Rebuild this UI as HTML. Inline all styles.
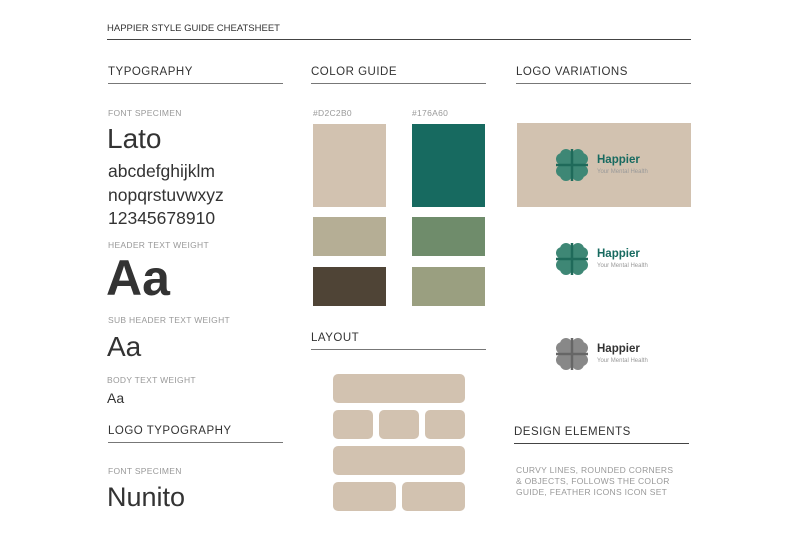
<!DOCTYPE html>
<html><head><meta charset="utf-8"><style>
*{margin:0;padding:0;box-sizing:border-box}
body{width:800px;height:533px;background:#fff;position:relative;overflow:hidden;font-family:"Liberation Sans",sans-serif;color:#333}
.a{position:absolute;white-space:nowrap;line-height:1}
.h{font-size:11.5px;color:#333;letter-spacing:0.5px}
.l{position:absolute;height:1px;background:#444}
.s{font-size:8.5px;color:#999;letter-spacing:0.3px}
.b{position:absolute;background:#D2C2B0;border-radius:5px}
.sw{position:absolute}
.lt{font-size:11.5px;font-weight:bold;color:#176A60}
.st{font-size:6px;color:#999}
</style></head><body>
<div class="a" style="left:107px;top:24px;font-size:9.5px;color:#333">HAPPIER STYLE GUIDE CHEATSHEET</div>
<div class="l" style="left:107px;top:39px;width:584px"></div>

<div class="a h" style="left:108px;top:67px">TYPOGRAPHY</div>
<div class="l" style="left:108px;top:83px;width:175px;background:#777"></div>
<div class="a h" style="left:311px;top:67px">COLOR GUIDE</div>
<div class="l" style="left:311px;top:83px;width:175px;background:#777"></div>
<div class="a h" style="left:516px;top:67px">LOGO VARIATIONS</div>
<div class="l" style="left:516px;top:83px;width:175px;background:#777"></div>

<div class="a s" style="left:108px;top:109px">FONT SPECIMEN</div>
<div class="a" style="left:107px;top:125px;font-size:28px;color:#333">Lato</div>
<div class="a" style="left:108px;top:163px;font-size:17.5px">abcdefghijklm</div>
<div class="a" style="left:108px;top:187px;font-size:17.5px">nopqrstuvwxyz</div>
<div class="a" style="left:108px;top:210px;font-size:17.5px">12345678910</div>
<div class="a s" style="left:108px;top:241px">HEADER TEXT WEIGHT</div>
<div class="a" style="left:106px;top:253px;font-size:50px;font-weight:bold;color:#333">Aa</div>
<div class="a s" style="left:108px;top:316px">SUB HEADER TEXT WEIGHT</div>
<div class="a" style="left:107px;top:333px;font-size:28px">Aa</div>
<div class="a s" style="left:107px;top:376px">BODY TEXT WEIGHT</div>
<div class="a" style="left:107px;top:391px;font-size:14px">Aa</div>
<div class="a h" style="left:108px;top:426px">LOGO TYPOGRAPHY</div>
<div class="l" style="left:108px;top:442px;width:175px;background:#777"></div>
<div class="a s" style="left:108px;top:467px">FONT SPECIMEN</div>
<div class="a" style="left:107px;top:484px;font-size:27px">Nunito</div>

<div class="a s" style="left:313px;top:109px">#D2C2B0</div>
<div class="a s" style="left:412px;top:109px">#176A60</div>
<div class="sw" style="left:313px;top:124px;width:73px;height:83px;background:#D2C2B0"></div>
<div class="sw" style="left:412px;top:124px;width:73px;height:83px;background:#176A60"></div>
<div class="sw" style="left:313px;top:217px;width:73px;height:39px;background:#B5AE95"></div>
<div class="sw" style="left:412px;top:217px;width:73px;height:39px;background:#6F8C6B"></div>
<div class="sw" style="left:313px;top:267px;width:73px;height:39px;background:#4F4436"></div>
<div class="sw" style="left:412px;top:267px;width:73px;height:39px;background:#9A9F80"></div>

<div class="a h" style="left:311px;top:333px">LAYOUT</div>
<div class="l" style="left:311px;top:349px;width:175px;background:#777"></div>
<div class="b" style="left:333px;top:374px;width:132px;height:29px"></div>
<div class="b" style="left:333px;top:410px;width:40px;height:29px"></div>
<div class="b" style="left:379px;top:410px;width:40px;height:29px"></div>
<div class="b" style="left:425px;top:410px;width:40px;height:29px"></div>
<div class="b" style="left:333px;top:446px;width:132px;height:29px"></div>
<div class="b" style="left:333px;top:482px;width:63px;height:29px"></div>
<div class="b" style="left:402px;top:482px;width:63px;height:29px"></div>

<div class="sw" style="left:517px;top:123px;width:174px;height:84px;background:#D2C2B0"></div>

<svg width="0" height="0" style="position:absolute"><defs>
<g id="clv">
<circle cx="-6" cy="-10" r="6"/><circle cx="6" cy="-10" r="6"/>
<circle cx="-6" cy="10" r="6"/><circle cx="6" cy="10" r="6"/>
<circle cx="-10" cy="-6" r="6"/><circle cx="-10" cy="6" r="6"/>
<circle cx="10" cy="-6" r="6"/><circle cx="10" cy="6" r="6"/>
<rect x="-8" y="-8" width="16" height="16"/>
</g></defs></svg>

<svg class="sw" style="left:554px;top:147px" width="36" height="36" viewBox="-18 -18 36 36"><use href="#clv" fill="#3E8775"/><path d="M0-16V16M-16 0H16" stroke="#1F6A5A" stroke-width="2.5"/></svg>
<div class="a lt" style="left:597px;top:155px">Happier</div>
<div class="a st" style="left:597px;top:169px">Your Mental Health</div>

<svg class="sw" style="left:554px;top:241px" width="36" height="36" viewBox="-18 -18 36 36"><use href="#clv" fill="#3E8775"/><path d="M0-16V16M-16 0H16" stroke="#1F6A5A" stroke-width="2.5"/></svg>
<div class="a lt" style="left:597px;top:249px">Happier</div>
<div class="a st" style="left:597px;top:263px">Your Mental Health</div>

<svg class="sw" style="left:554px;top:336px" width="36" height="36" viewBox="-18 -18 36 36"><use href="#clv" fill="#888"/><path d="M0-16V16M-16 0H16" stroke="#666" stroke-width="2.5"/></svg>
<div class="a lt" style="left:597px;top:344px;color:#333">Happier</div>
<div class="a st" style="left:597px;top:358px">Your Mental Health</div>

<div class="a h" style="left:514px;top:427px">DESIGN ELEMENTS</div>
<div class="l" style="left:514px;top:443px;width:175px;background:#444"></div>
<div class="a" style="left:516px;top:465px;font-size:8.5px;color:#999;line-height:11px;letter-spacing:0.3px">CURVY LINES, ROUNDED CORNERS<br>&amp; OBJECTS, FOLLOWS THE COLOR<br>GUIDE, FEATHER ICONS ICON SET</div>
</body></html>
